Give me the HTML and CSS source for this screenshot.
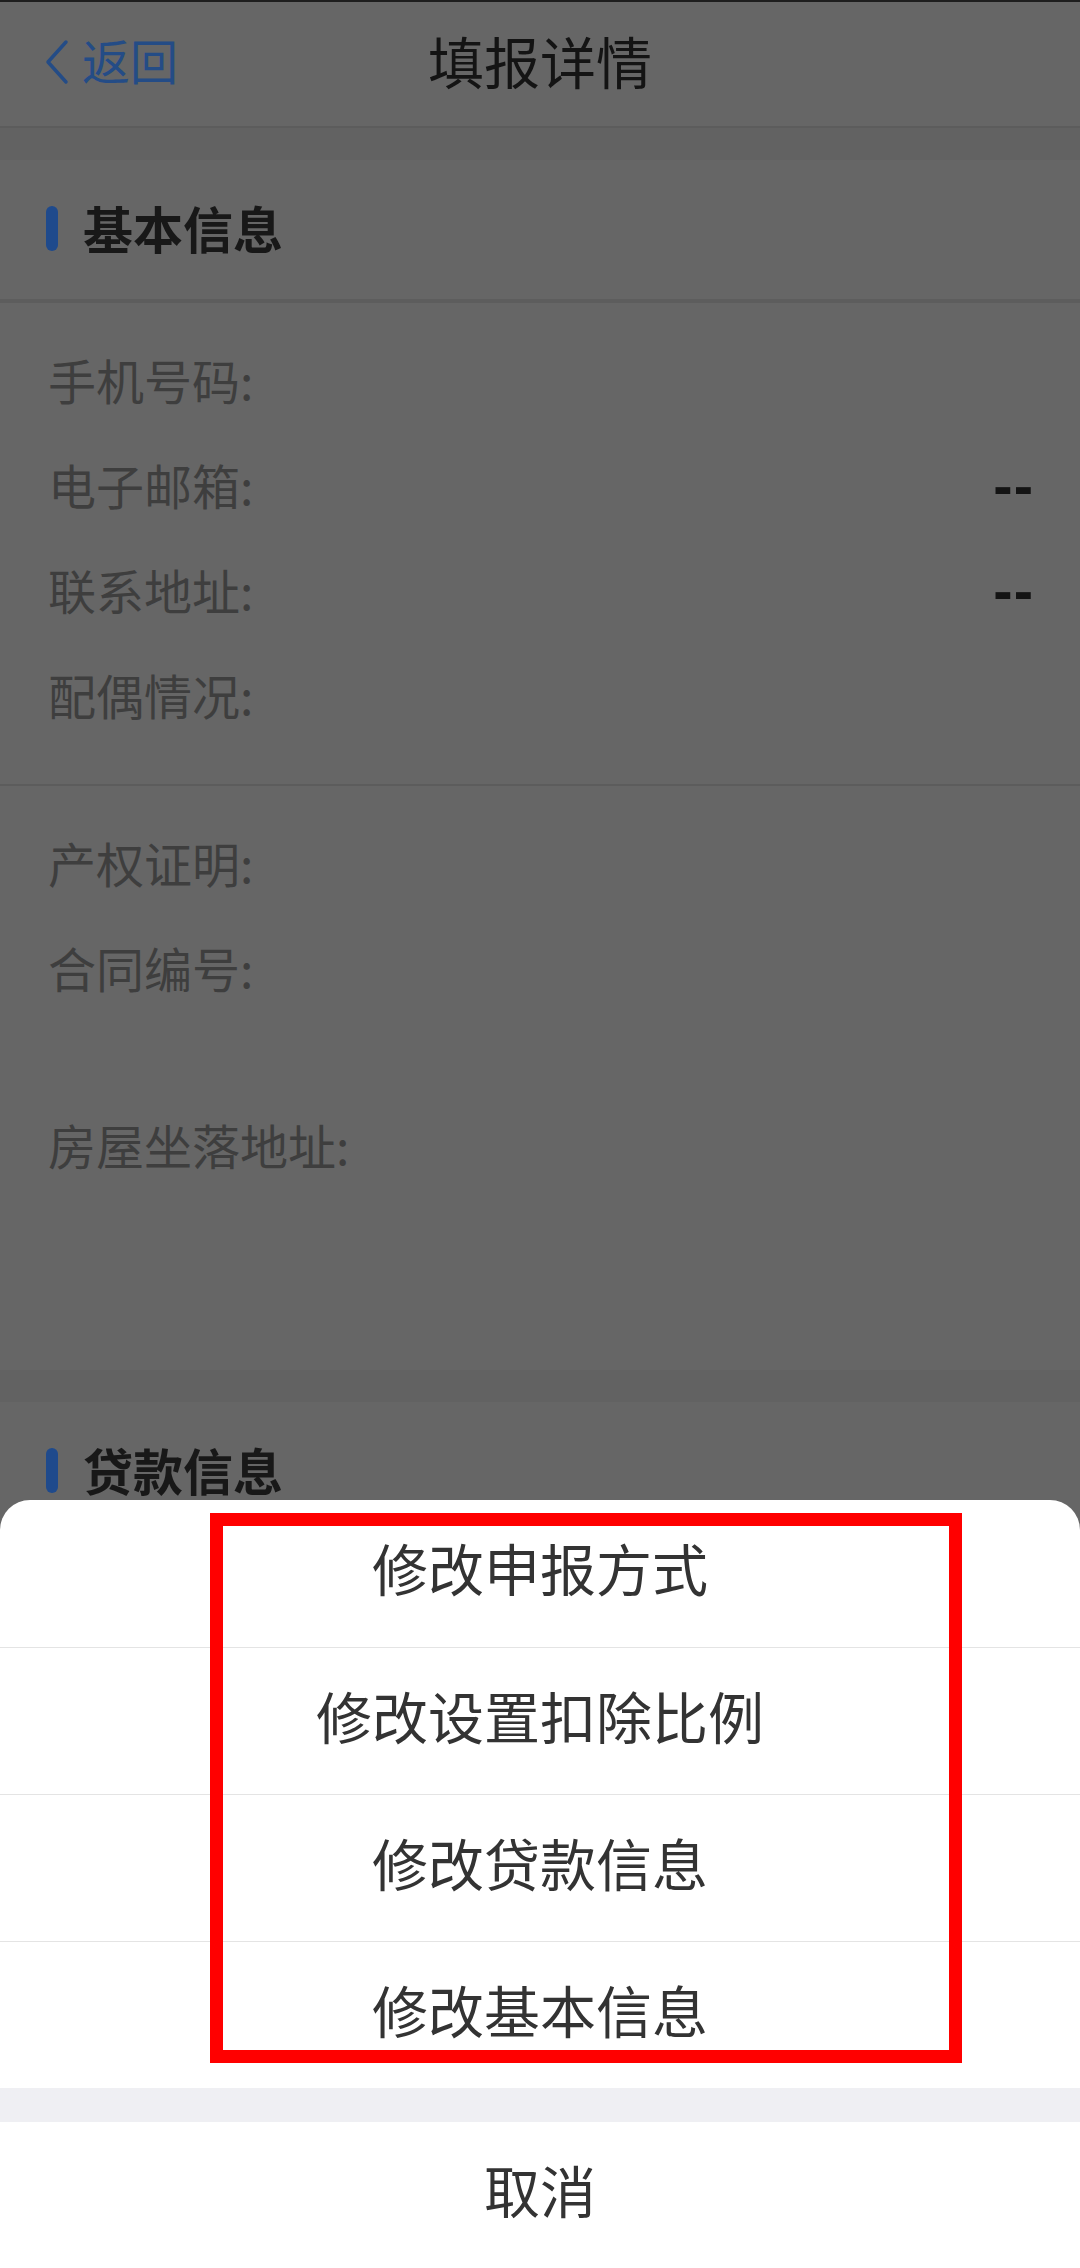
FILE: index.html
```html
<!DOCTYPE html>
<html lang="zh-CN">
    <head>
        <meta charset="utf-8">
        <title>填报详情</title>
        <link rel="stylesheet" href="styles.css">
    </head>

    <body>
        <div class="Page">
            <div class="NavBar">
                <div class="Back">
                    <svg class="BackIcon" width="26" height="46" viewBox="0 0 26 46">
                        <polyline points="22,3 4,23 22,43" fill="none" stroke="#244c86" stroke-width="3.5" stroke-linecap="round" stroke-linejoin="round"/>
                    </svg>
                    <span>返回</span>
                </div>
                <div class="Title">填报详情</div>
                <div></div>
            </div>

            <div class="Gap"></div>

            <div class="SectionHead">
                <span class="Bar"></span>
                <span>基本信息</span>
            </div>

            <div class="Rows BasicRows">
                <div class="Row"><span class="Label">手机号码:</span><span class="Value"></span></div>
                <div class="Row"><span class="Label">电子邮箱:</span><span class="Value">--</span></div>
                <div class="Row"><span class="Label">联系地址:</span><span class="Value">--</span></div>
                <div class="Row"><span class="Label">配偶情况:</span><span class="Value"></span></div>
            </div>

            <div class="Rows HouseRows">
                <div class="Row"><span class="Label">产权证明:</span><span class="Value"></span></div>
                <div class="Row"><span class="Label">合同编号:</span><span class="Value"></span></div>
                <div class="Row Address"><span class="Label">房屋坐落地址:</span><span class="Value"></span></div>
            </div>

            <div class="Gap"></div>

            <div class="SectionHead">
                <span class="Bar"></span>
                <span>贷款信息</span>
            </div>
        </div>

        <!-- hoja de acciones -->
        <div class="Sheet">
            <div class="Action">修改申报方式</div>
            <div class="Action">修改设置扣除比例</div>
            <div class="Action">修改贷款信息</div>
            <div class="Action">修改基本信息</div>
            <div class="SheetGap"></div>
            <div class="Cancel">取消</div>

            <div class="Mark"></div>
        </div>
    </body>
</html>
```

FILE: styles.css
```css
body{
    margin: 0;
    background: #666666;
    font-family: "Noto Sans CJK SC", "Noto Sans", sans-serif;
    overflow: hidden;
}

.Page{
    height: 2268px;
    background: #666666;
}

.NavBar{
    display: grid;
    grid-template-columns: 1fr auto 1fr;
    align-items: center;
    height: 114px;
    padding-bottom: 10px;
    border-top: 2px solid #1e1e1e;
    border-bottom: 2px solid #5c5c5c;
}

.Back{
    display: flex;
    align-items: center;
    gap: 12px;
    padding-left: 44px;
    color: #244c86;
    font-size: 48px;
}

.BackIcon{
    margin-top: 6px;
}

.Title{
    font-size: 56px;
    color: #141414;
}

.Gap{
    height: 32px;
    background: #626262;
}

.SectionHead{
    display: flex;
    align-items: center;
    gap: 25px;
    height: 133px;
    padding: 0 0 6px 46px;
    font-size: 50px;
    font-weight: bold;
    color: #181818;
}

.Bar{
    width: 12px;
    height: 45px;
    border-radius: 6px;
    background: #1f4a8c;
    margin-top: 4px;
}

.Rows{
    padding: 23px 48px 0 48px;
}

.BasicRows{
    border-top: 4px solid #5d5d5d;
    border-bottom: 2px solid #5c5c5c;
    padding-bottom: 38px;
}

.HouseRows{
    padding-bottom: 174px;
}

.Row{
    display: flex;
    justify-content: space-between;
    align-items: center;
    height: 105px;
    font-size: 48px;
}

.Address{
    margin-top: 72px;
}

.Label{
    color: #3e3e3e;
}

.Value{
    color: #141414;
    font-family: "Liberation Sans", sans-serif;
    font-weight: bold;
    font-size: 58px;
    letter-spacing: 1px;
    margin-right: -2px;
    margin-top: 4px;
}

.Sheet{
    position: fixed;
    left: 0;
    right: 0;
    bottom: 0;
    height: 768px;
    background: #ffffff;
    border-radius: 30px 30px 0 0;
    overflow: hidden;
}

.Action{
    display: flex;
    align-items: center;
    justify-content: center;
    height: 132px;
    padding-bottom: 14px;
    border-top: 1px solid #e4e4e4;
    font-size: 56px;
    color: #333333;
}

.Action:first-child{
    border-top: none;
    height: 133px;
}

.SheetGap{
    height: 34px;
    background: #efeff3;
}

.Cancel{
    display: flex;
    align-items: center;
    justify-content: center;
    height: 132px;
    padding-bottom: 14px;
    font-size: 56px;
    color: #333333;
}

/* recuadro rojo encima de las opciones */
.Mark{
    position: absolute;
    left: 210px;
    top: 13px;
    width: 752px;
    height: 550px;
    box-sizing: border-box;
    border: 13px solid #ff0000;
}
```
